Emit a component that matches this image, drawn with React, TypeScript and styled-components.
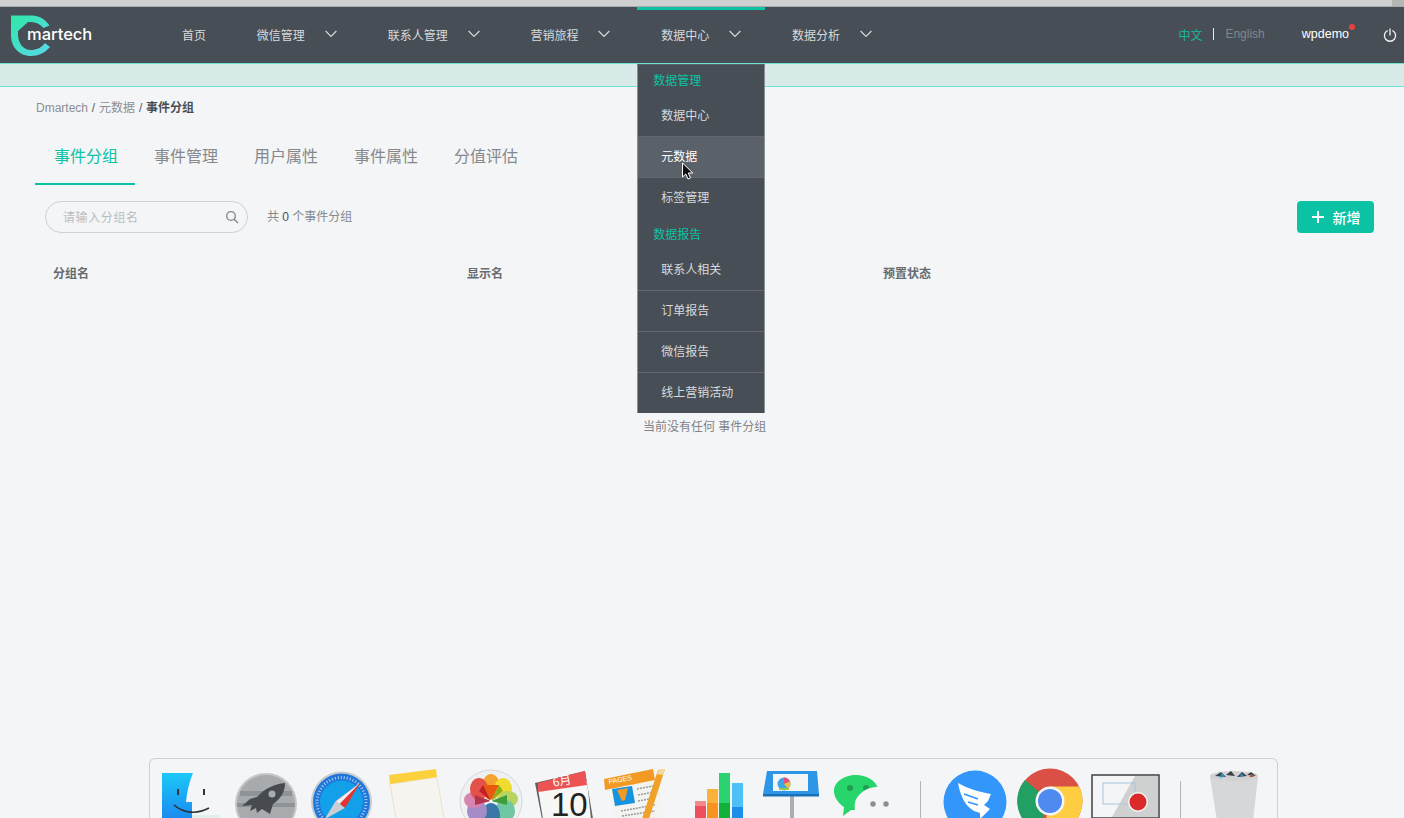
import React from "react";
import styled, { createGlobalStyle } from "styled-components";

const GlobalStyle = createGlobalStyle`
  html, body {
    margin: 0;
    padding: 0;
    background: #f4f5f7;
    font-family: "Liberation Sans", "Noto Sans CJK SC", sans-serif;
  }
`;

const Page = styled.div`
  width: 1404px;
  height: 818px;
  overflow: hidden;
  display: flex;
  flex-direction: column;
  background: #f4f5f7;
  position: relative;
`;

const TopStrip = styled.div`
  height: 6px;
  background: #cfd0cf;
  border-bottom: 1px solid #a9acad;
  display: flex;
  justify-content: flex-end;
  flex-shrink: 0;
`;

const StripThumb = styled.div`
  width: 12px;
  background: #b4b5b5;
`;

const Header = styled.header`
  height: 56px;
  background: #474e55;
  border-bottom: 1px solid #6fe3d0;
  display: flex;
  align-items: stretch;
  flex-shrink: 0;
`;

const LogoBox = styled.div`
  width: 158px;
  position: relative;
  flex-shrink: 0;
`;

const LogoMark = styled.svg`
  position: absolute;
  left: 0;
  top: 0;
  width: 52px;
  height: 52px;
`;

const LogoText = styled.span`
  position: absolute;
  left: 27px;
  top: 15px;
  color: #fff;
  font-family: "Inter", sans-serif;
  font-weight: 500;
  font-size: 16.5px;
  line-height: 24px;
`;

const Nav = styled.nav`
  display: flex;
  gap: 2.8px;
  flex: 1;
`;

const NavItem = styled.div<{ $active?: boolean }>`
  position: relative;
  display: flex;
  align-items: center;
  gap: 20px;
  padding: 0 24px 2px;
  font-size: 12px;
  color: #d8dadc;
  box-shadow: ${(p) => (p.$active ? "inset 0 3px 0 #0cc2a5" : "none")};
`;

const Chevron = styled.svg`
  width: 12px;
  height: 8px;
  fill: none;
  stroke: #d5d8da;
  stroke-width: 1.2;
`;

const Dropdown = styled.div`
  position: absolute;
  top: 57px;
  left: 0;
  width: 128px;
  box-sizing: border-box;
  background: #474e55;
  border-left: 1px solid #8a9095;
  border-right: 1px solid #8a9095;
  border-top: 1px solid #5a6168;
  z-index: 5;
`;

const MenuGroup = styled.div`
  height: 31px;
  line-height: 33px;
  padding-left: 15px;
  font-size: 12px;
  color: #0cc2a5;
`;

const MenuRow = styled.div<{ $hover?: boolean; $line?: boolean }>`
  height: 40px;
  line-height: 40px;
  padding-left: 23px;
  font-size: 12px;
  color: ${(p) => (p.$hover ? "#ffffff" : "#d8dadc")};
  background: ${(p) => (p.$hover ? "#5b6168" : "transparent")};
  border-bottom: 1px solid ${(p) => (p.$line ? "#62686e" : "transparent")};

  &:last-child {
    border-bottom: none;
  }
`;

const LangBox = styled.div`
  display: flex;
  align-items: center;
  font-size: 12px;
  margin-right: 37px;
  padding-bottom: 2px;
`;

const LangActive = styled.span`
  color: #17b89e;
`;

const LangDivider = styled.span`
  width: 1px;
  height: 12px;
  background: #e8eaeb;
  margin: 0 11px;
`;

const LangOther = styled.span`
  color: #82888d;
`;

const UserBox = styled.div`
  position: relative;
  align-self: center;
  color: #fff;
  font-size: 12.5px;
  margin: 0 34px 2px 0;
`;

const RedDot = styled.span`
  position: absolute;
  right: -6px;
  top: -3px;
  width: 6px;
  height: 6px;
  border-radius: 50%;
  background: #e8423f;
`;

const PowerIcon = styled.svg`
  align-self: center;
  width: 14px;
  height: 14px;
  margin-right: 7px;
  fill: none;
  stroke: #f2f3f4;
  stroke-width: 1.3;
  stroke-linecap: round;
`;

const Band = styled.div`
  height: 22px;
  background: #d9ebe9;
  border-bottom: 1px solid #6fe3d0;
  flex-shrink: 0;
`;

const Content = styled.main`
  flex: 1;
  display: flex;
  flex-direction: column;
  padding: 0 30px 0 35px;
  min-height: 0;
`;

const Breadcrumb = styled.div`
  margin-top: 14px;
  padding-left: 1px;
  height: 14px;
  line-height: 14px;
  font-size: 12px;
  color: #8a8f94;
`;

const CrumbSep = styled.span`
  color: #555b60;
  margin: 0 0.5px;
`;

const CrumbCurrent = styled.span`
  color: #4a4f54;
  font-weight: 700;
`;

const Tabs = styled.div`
  display: flex;
  margin-top: 20px;
`;

const Tab = styled.div<{ $active?: boolean }>`
  width: 100px;
  height: 50px;
  box-sizing: border-box;
  padding-left: 2px;
  text-align: center;
  line-height: 44px;
  font-size: 16px;
  color: ${(p) => (p.$active ? "#0cc2a5" : "#85898e")};
  border-bottom: 2px solid ${(p) => (p.$active ? "#0cc2a5" : "transparent")};
`;

const Toolbar = styled.div`
  display: flex;
  align-items: center;
  margin-top: 16px;
  padding-left: 10px;
`;

const SearchBox = styled.div`
  width: 203px;
  height: 32px;
  box-sizing: border-box;
  border: 1px solid #c9d2d6;
  border-radius: 16px;
  display: flex;
  align-items: center;
  justify-content: space-between;
  padding: 0 8px 1px 17px;
  font-size: 12px;
  color: #b9bcbf;
  letter-spacing: 0.6px;
`;

const SearchIcon = styled.svg`
  width: 14px;
  height: 14px;
  fill: none;
  stroke: #7d8286;
  stroke-width: 1.3;
`;

const CountText = styled.span`
  margin-left: 19px;
  padding-bottom: 3px;
  font-size: 12px;
  color: #85898e;
`;

const CountNum = styled.span`
  color: #4a4f54;
`;

const AddButton = styled.button`
  margin-left: auto;
  width: 77px;
  height: 32px;
  border: none;
  border-radius: 4px;
  background: #0cc2a5;
  color: #fff;
  font-family: inherit;
  font-size: 14px;
  font-weight: 500;
  display: flex;
  align-items: center;
  justify-content: center;
  gap: 8px;
  padding: 0;
`;

const PlusIcon = styled.svg`
  width: 14px;
  height: 14px;
  stroke: #fff;
  stroke-width: 2;
`;

const TableHead = styled.div`
  display: grid;
  grid-template-columns: 414px 416px 1fr;
  margin-top: 33px;
  padding-left: 18px;
  font-size: 12px;
  font-weight: 700;
  color: #666b70;
  height: 16px;
  line-height: 16px;
`;

const EmptyText = styled.div`
  margin-top: 137px;
  padding-left: 608px;
  width: 140px;
  font-size: 12px;
  line-height: 16px;
  color: #808489;
  white-space: nowrap;
`;

const Dock = styled.div`
  margin: auto 0 0 149px;
  width: 1129px;
  height: 60px;
  box-sizing: border-box;
  border: 1px solid #c9d3d2;
  border-bottom: none;
  border-radius: 6px 6px 0 0;
  padding-left: 3px;
  display: flex;
  flex-shrink: 0;
  overflow: hidden;
`;

const DockSlot = styled.svg`
  width: 75px;
  height: 60px;
  flex-shrink: 0;
  display: block;
`;

const DockSep = styled.div`
  width: 35px;
  flex-shrink: 0;
  display: flex;
  justify-content: center;
  padding-top: 22px;

  &::before {
    content: "";
    width: 1px;
    background: #b4b7b9;
  }
`;

const Cursor = styled.svg`
  position: absolute;
  left: 681px;
  top: 162px;
  width: 14px;
  height: 20px;
  z-index: 6;
`;

const Finder = () => (
  <DockSlot viewBox="0 0 75 60">
    <defs>
      <linearGradient id="finderBlue" x1="0" y1="0" x2="0" y2="1">
        <stop offset="0" stopColor="#1cc8f8" />
        <stop offset="1" stopColor="#1a8aef" />
      </linearGradient>
    </defs>
    <rect x="9" y="56" width="58" height="4" fill="#dff0ec" />
    <path d="M9 14h31c-4 9-6 19-7 29h6v17H9z" fill="url(#finderBlue)" />
    <rect x="24" y="30" width="2" height="6" fill="#333" />
    <rect x="50" y="30" width="2" height="6" fill="#333" />
    <path d="M21 46c10 9 24 9 35 3" fill="none" stroke="#2b3038" strokeWidth="1.6" />
  </DockSlot>
);

const Launchpad = () => (
  <DockSlot viewBox="0 0 75 60">
    <circle cx="38" cy="45" r="31" fill="#c4c6c7" />
    <circle cx="38" cy="45" r="29" fill="#a7abad" />
    <path d="M12 32h52v5H12zM9 44h58v4H9z" fill="#8e9395" />
    <path d="M57 24C46 25 36 30 29 38l-7 2-8 7 10-1-2 6 6-3 1 5 5-4 8 5 3-10c9-6 12-13 12-21z" fill="#474a4e" />
    <circle cx="44" cy="35" r="3.500" fill="#a9adaf" />
  </DockSlot>
);

const Safari = () => (
  <DockSlot viewBox="0 0 75 60">
    <circle cx="38.500" cy="43" r="30.500" fill="#c9cdd0" />
    <circle cx="38.500" cy="43" r="28.500" fill="#2076d9" />
    <circle cx="38.500" cy="43" r="24.500" fill="none" stroke="#a8d0f5" strokeWidth="3" strokeDasharray="1 2" />
    <circle cx="38.500" cy="43" r="21.500" fill="#12a0e8" />
    <path d="M57 24 33 42l9 7z" fill="#e9322e" />
    <path d="M22 60 57 24 33 42z" fill="#eceff1" />
    <path d="M22 60 42 49l-9-7z" fill="#c9ced2" />
  </DockSlot>
);

const Notes = () => (
  <DockSlot viewBox="0 0 75 60">
    <path d="M12 25 59 18l7 42H18z" fill="#f5f4ef" stroke="#ecdcc0" strokeWidth="0.8" />
    <path d="M11 16 58 10l1 8-47 7z" fill="#fbd13d" />
  </DockSlot>
);

const Photos = () => (
  <DockSlot viewBox="0 0 75 60">
    <circle cx="38" cy="42" r="31" fill="#eef0f2" stroke="#d5d8da" />
    <g transform="translate(0 -6)">
      <ellipse cx="38" cy="34" rx="9" ry="13" fill="#f4a32f" />
      <ellipse cx="50" cy="36" rx="9" ry="11" fill="#efdc2f" />
      <ellipse cx="55" cy="46" rx="10" ry="8" fill="#b4d360" />
      <ellipse cx="52" cy="58" rx="10" ry="11" fill="#6fc7a4" />
      <ellipse cx="38" cy="62" rx="9" ry="12" fill="#3a76a8" />
      <ellipse cx="24" cy="58" rx="10" ry="11" fill="#a58bc7" />
      <ellipse cx="21" cy="47" rx="10" ry="8" fill="#d785ae" />
      <ellipse cx="26" cy="36" rx="9" ry="11" fill="#e4504a" />
      <path d="M38 48 30 32h16z" fill="#e85a10" />
      <path d="M38 48 50 38l-4-6z" fill="#8fae1f" />
      <path d="M38 48 54 42v10z" fill="#3f9d3c" />
      <path d="M38 48 22 42v10z" fill="#b3344d" />
      <path d="M38 48 26 38l4-6z" fill="#c4202a" />
      <circle cx="38" cy="48" r="1.400" fill="#fff" />
    </g>
  </DockSlot>
);

const Calendar = () => (
  <DockSlot viewBox="0 0 75 60">
    <path d="M7 24 57 12l8 48H14z" fill="#5b6167" />
    <path d="M10 30 59 22l4 38H15z" fill="#f7f7f6" />
    <path d="M10 24 57 12l2 14-49 7z" fill="#ec5353" />
    <text x="25" y="26" fill="#fff" fontSize="12" fontFamily="Noto Sans CJK SC" transform="rotate(-10 35 24)">6月</text>
    <text x="23" y="57" fill="#222" fontSize="33" fontFamily="Liberation Sans">10</text>
  </DockSlot>
);

const Pages = () => (
  <DockSlot viewBox="0 0 75 60">
    <path d="M6 22 53 13l9 47H13z" fill="#f3f3f1" />
    <path d="M1 20 50 10l2 11-50 10z" fill="#f39a24" />
    <text x="6" y="25" fill="#fff" fontSize="7" fontFamily="Liberation Sans" transform="rotate(-10 6 25)">PAGES</text>
    <path d="M9 30 29 27l3 17-20 3z" fill="#1793dd" />
    <path d="M14 31 25 29l-3 12-3 1z" fill="#f39a24" />
    <path d="M34 30l16-3M35 36l16-3M35 42l17-3M18 52l34-6M19 57l33-5" stroke="#9a9b9b" strokeWidth="1.5" strokeDasharray="2 1" />
    <path d="M55 11 62 10 46 60h-7z" fill="#f0a128" />
    <path d="M56 10l6 0-2 6-6-1z" fill="#f4d9a0" />
  </DockSlot>
);

const Numbers = () => (
  <DockSlot viewBox="0 0 75 60">
    <rect x="17" y="42" width="11" height="18" fill="#ee4f5c" />
    <rect x="17" y="42" width="11" height="5" fill="#f28a8c" />
    <rect x="29" y="30" width="11" height="30" fill="#f7941d" />
    <rect x="29" y="30" width="11" height="14" fill="#fcb13c" />
    <rect x="41" y="14" width="11" height="46" fill="#2bd370" />
    <rect x="41" y="44" width="11" height="16" fill="#13b13c" />
    <rect x="54" y="24" width="11" height="36" fill="#4cc0f7" />
    <rect x="54" y="48" width="11" height="12" fill="#1d8fe8" />
  </DockSlot>
);

const Keynote = () => (
  <DockSlot viewBox="0 0 75 60">
    <rect x="37" y="37" width="4" height="23" fill="#a8b0b5" />
    <path d="M14 12h50l2 23H10z" fill="#2e96e6" />
    <rect x="10" y="35" width="56" height="2.500" fill="#1a6fb8" />
    <rect x="20" y="15" width="35" height="17" fill="#f3f5f6" />
    <circle cx="31" cy="25" r="6.500" fill="#3aa8e8" />
    <path d="M31 25v-6.500a6.500 6.500 0 0 1 6 4z" fill="#e9507a" />
    <path d="M31 25l6-2.500a6.500 6.500 0 0 1-2 7z" fill="#f2c230" />
    <path d="M26 30h10" stroke="#9acb4c" strokeWidth="2" />
  </DockSlot>
);

const WeChat = () => (
  <DockSlot viewBox="0 0 75 60">
    <g transform="translate(-4 1)">
      <path d="M27 50 19 56l1-9C14 43 10 37 10 31 10 22 20 15 32 15c10 0 19 5 22 13-13 0-25 8-23 22z" fill="#28d46c" />
      <circle cx="26" cy="28" r="3" fill="#1f9d52" />
      <circle cx="42" cy="28" r="3" fill="#1f9d52" />
      <path d="M54 27c9 1 17 8 17 17 0 6-4 12-11 15H40c-6-4-10-9-9-16 1-8 12-17 23-16z" fill="#f4f5f7" />
      <circle cx="49" cy="44" r="2.700" fill="#8a8f92" />
      <circle cx="62" cy="44" r="2.700" fill="#8a8f92" />
    </g>
  </DockSlot>
);

const DingTalk = () => (
  <DockSlot viewBox="0 0 75 60">
    <circle cx="37" cy="43" r="31.500" fill="#3296fa" />
    <path d="M20 24c10 6 22 9 33 11l-3 7-4 4 6 4-10 10v-6l-6-2c-10-6-14-17-16-28z" fill="#fff" />
    <path d="M26 35l14 5M30 43l10 3" stroke="#3296fa" strokeWidth="1.500" />
  </DockSlot>
);

const Chrome = () => (
  <DockSlot viewBox="0 0 75 60">
    <circle cx="37" cy="42" r="32.500" fill="#da5044" />
    <path d="M37 42 12 21A32.500 32.500 0 0 0 24 72z" fill="#22a064" />
    <path d="M37 27.500H66A32.500 32.500 0 0 1 30 74L37 42z" fill="#fecd41" />
    <circle cx="37" cy="42" r="14.500" fill="#f4f5f7" />
    <circle cx="37" cy="42" r="12" fill="#4e8af0" />
  </DockSlot>
);

const Recorder = () => (
  <DockSlot viewBox="0 0 75 60">
    <rect x="4" y="16" width="67" height="43" fill="#f4f5f7" stroke="#3d4246" strokeWidth="1.500" />
    <path d="M47 17h23v41H24z" fill="#cfd1d0" />
    <rect x="15" y="24" width="32" height="21" fill="none" stroke="#a9c4df" />
    <circle cx="50" cy="43" r="10" fill="#f4f5f7" />
    <circle cx="50" cy="43" r="8.500" fill="#da2a2a" />
    <rect x="31" y="59" width="13" height="1" fill="#111" />
  </DockSlot>
);

const Trash = () => (
  <DockSlot viewBox="0 0 75 60">
    <g transform="translate(3 -4)">
      <path d="M9 22h48l-5 44H16z" fill="#d5d7d8" />
      <ellipse cx="33" cy="21" rx="24" ry="5" fill="#cfd1d2" />
      <path d="M14 21l6-4 5 5zM25 20l5-4 4 5zM36 22l5-5 5 4zM46 20l4-3 5 4z" fill="#3a3f44" />
      <path d="M20 18l4 3-5 2zM40 18l3 3-4 1z" fill="#2d8fc4" />
      <path d="M48 22l3-3 2 3z" fill="#c2533c" />
    </g>
  </DockSlot>
);

const Arrow = () => (
  <Chevron viewBox="0 0 12 8">
    <path d="M.6 1 6 6.500 11.400 1" />
  </Chevron>
);

const navItems = [
  { name: "首页" },
  { name: "微信管理", more: true },
  { name: "联系人管理", more: true },
  { name: "营销旅程", more: true },
  { name: "数据中心", more: true, active: true },
  { name: "数据分析", more: true },
];

const tabs = ["事件分组", "事件管理", "用户属性", "事件属性", "分值评估"];

const App: React.FC = () => {
  return (
    <Page>
      <GlobalStyle />
      <TopStrip>
        <StripThumb />
      </TopStrip>
      <Header>
        <LogoBox>
          <LogoMark viewBox="0 0 52 52">
            <defs>
              <linearGradient id="logoGrad" x1="0" y1="0" x2="1" y2="1">
                <stop offset="0" stopColor="#2fe8a8" />
                <stop offset="1" stopColor="#5bd8ea" />
              </linearGradient>
            </defs>
            <path
              d="M11 8.500H32C39 8.500 45 12 49.500 18.500L43.500 21C40 17 36 15 31 15H28L18 24V27C18 36 23 43 31 43C36 43 41 41 45 36L50 40C45 46 38 49 31 49C19 49 11 40 11 28Z"
              fill="url(#logoGrad)"
            />
          </LogoMark>
          <LogoText>martech</LogoText>
        </LogoBox>
        <Nav>
          {navItems.map((item) => (
            <NavItem key={item.name} $active={item.active}>
              {item.name}
              {item.more && <Arrow />}
              {item.active && (
                <Dropdown>
                  <MenuGroup>数据管理</MenuGroup>
                  <MenuRow $line>数据中心</MenuRow>
                  <MenuRow $hover $line>元数据</MenuRow>
                  <MenuRow>标签管理</MenuRow>
                  <MenuGroup>数据报告</MenuGroup>
                  <MenuRow $line>联系人相关</MenuRow>
                  <MenuRow $line>订单报告</MenuRow>
                  <MenuRow $line>微信报告</MenuRow>
                  <MenuRow>线上营销活动</MenuRow>
                </Dropdown>
              )}
            </NavItem>
          ))}
        </Nav>
        <LangBox>
          <LangActive>中文</LangActive>
          <LangDivider />
          <LangOther>English</LangOther>
        </LangBox>
        <UserBox>
          wpdemo
          <RedDot />
        </UserBox>
        <PowerIcon viewBox="0 0 14 14">
          <path d="M4.200 2.800a5.600 5.600 0 1 0 5.600 0M7 1v6" />
        </PowerIcon>
      </Header>
      <Band />
      <Content>
        <Breadcrumb>
          Dmartech <CrumbSep>/</CrumbSep> 元数据 <CrumbSep>/</CrumbSep>{" "}
          <CrumbCurrent>事件分组</CrumbCurrent>
        </Breadcrumb>
        <Tabs>
          {tabs.map((tab, i) => (
            <Tab key={tab} $active={i === 0}>
              {tab}
            </Tab>
          ))}
        </Tabs>
        <Toolbar>
          <SearchBox>
            请输入分组名
            <SearchIcon viewBox="0 0 14 14">
              <circle cx="6" cy="6" r="4.300" />
              <path d="M9.200 9.200 13 13" />
            </SearchIcon>
          </SearchBox>
          <CountText>
            共 <CountNum>0</CountNum> 个事件分组
          </CountText>
          <AddButton>
            <PlusIcon viewBox="0 0 14 14">
              <path d="M7 1v12M1 7h12" />
            </PlusIcon>
            新增
          </AddButton>
        </Toolbar>
        <TableHead>
          <span>分组名</span>
          <span>显示名</span>
          <span>预置状态</span>
        </TableHead>
        <EmptyText>当前没有任何 事件分组</EmptyText>
      </Content>
      <Dock>
        <Finder />
        <Launchpad />
        <Safari />
        <Notes />
        <Photos />
        <Calendar />
        <Pages />
        <Numbers />
        <Keynote />
        <WeChat />
        <DockSep />
        <DingTalk />
        <Chrome />
        <Recorder />
        <DockSep />
        <Trash />
      </Dock>
      <Cursor viewBox="0 0 14 20">
        <path d="M1.500 1v14l3.300-3 2.200 5 2.500-1-2.200-5h4.500z" fill="#111" stroke="#fff" strokeWidth="1" />
      </Cursor>
    </Page>
  );
};

export default App;
